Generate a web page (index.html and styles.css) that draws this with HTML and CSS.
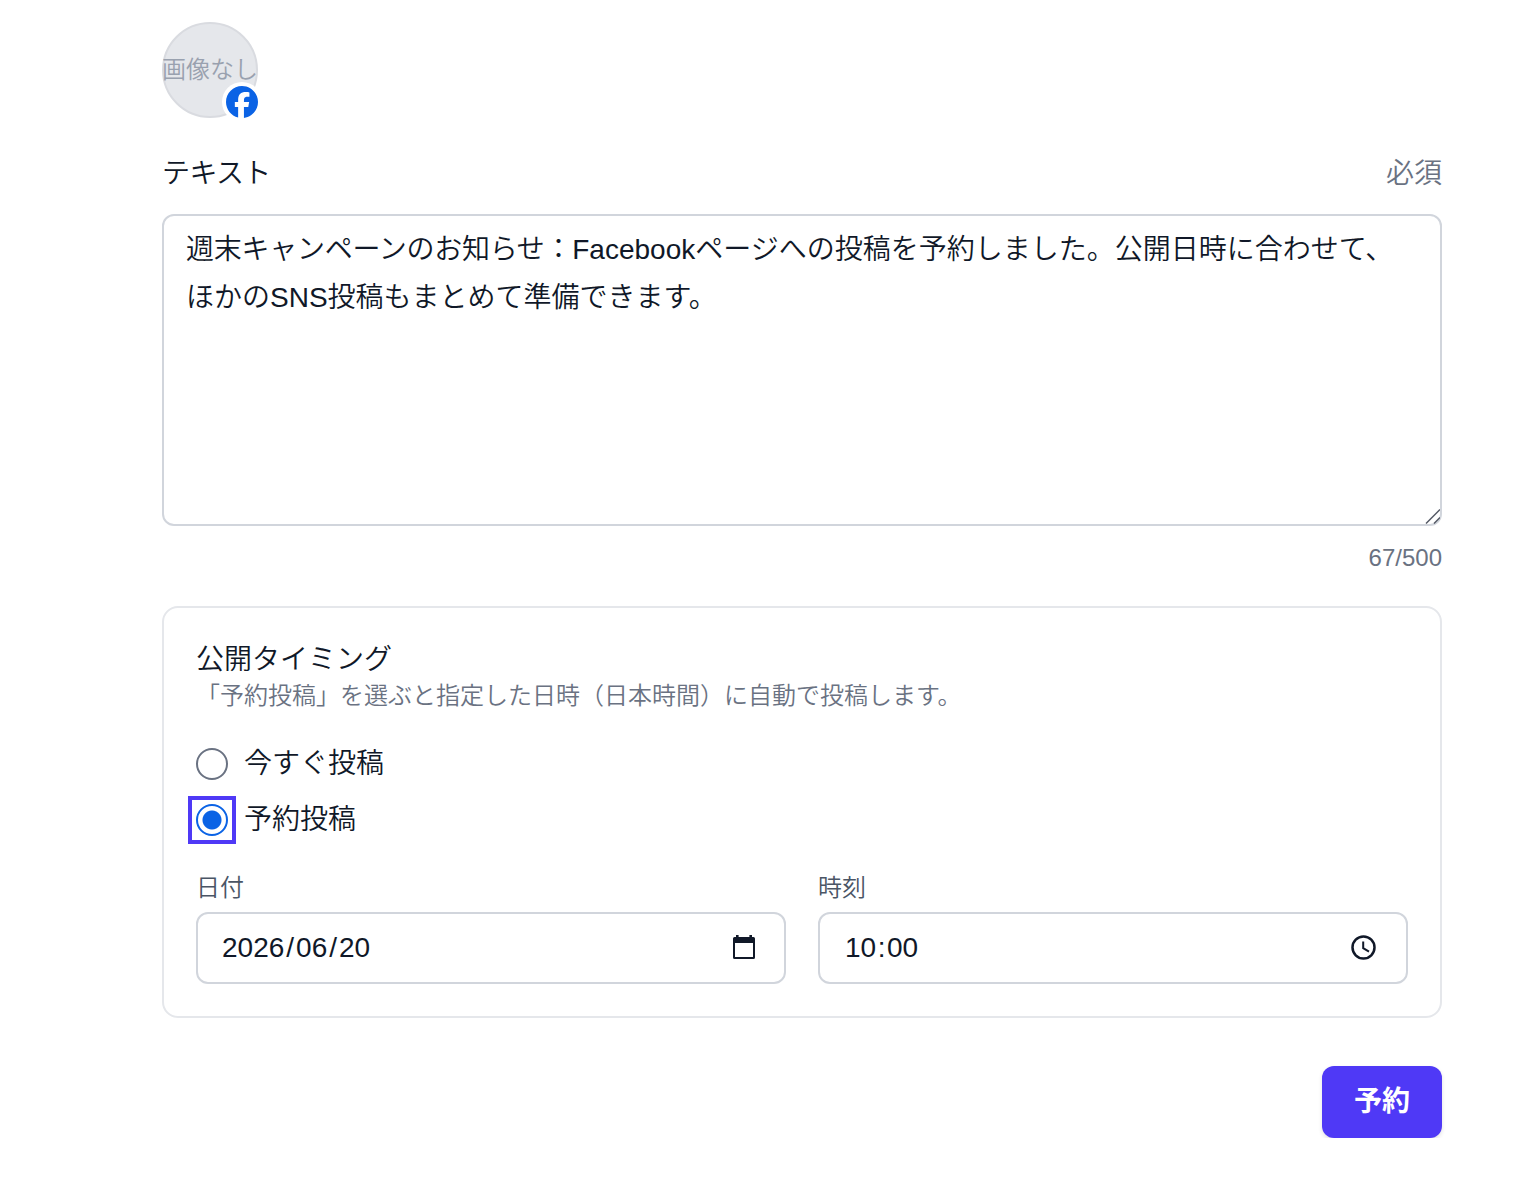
FILE: index.html
```html
<!DOCTYPE html>
<html lang="ja">
<head>
<meta charset="utf-8">
<title>予約投稿</title>
<link rel="stylesheet" href="styles.css">
</head>
<body>
<main class="composer">
  <div class="account">
    <span class="avatar">画像なし</span>
    <span class="badge">
      <svg width="32" height="32" viewBox="0 0 24 24"><path fill="#0b63e5" d="M9.101 23.691v-7.980H6.627v-3.667h2.474v-1.580c0-4.085 1.848-5.978 5.858-5.978.401 0 .955.042 1.468.103a8.680 8.680 0 0 1 1.141.195v3.325a8.623 8.623 0 0 0-.653-.036 26.805 26.805 0 0 0-.733-.009c-.707 0-1.259.096-1.675.309a1.686 1.686 0 0 0-.679.622c-.258.420-.374.995-.374 1.752v1.297h3.919l-.386 2.103-.287 1.564h-3.246v8.245C19.396 23.238 24 18.179 24 12.044c0-6.627-5.373-12-12-12s-12 5.373-12 12c0 5.628 3.874 10.350 9.101 11.647Z"/></svg>
    </span>
  </div>

  <div class="field-head"><span class="title">テキスト</span><span class="required">必須</span></div>
  <div class="textarea">
    <div><span class="kana-tight">週末キャンペーンのお知らせ：</span>Facebookページへの投稿を予約しました。公開日時に合わせて、</div>
    <div>ほかのSNS投稿もまとめて準備できます。</div>
    <svg class="resizer" width="16" height="16" viewBox="0 0 16 16"><path d="M2 15.500 16 1.500M10 15.500l6-6" fill="none" stroke="#555a66" stroke-width="1.500"/></svg>
  </div>
  <div class="counter">67/500</div>

  <section class="timing">
    <h2>公開タイミング</h2>
    <p>「予約投稿」を選ぶと指定した日時（日本時間）に自動で投稿します。</p>
    <div class="options">
      <label class="option"><span class="radio"></span>今すぐ投稿</label>
      <label class="option"><span class="radio checked"></span>予約投稿</label>
    </div>
    <div class="schedule">
      <div>
        <div class="label">日付</div>
        <div class="input"><span>2026<span class="sep">/</span>06<span class="sep">/</span>20</span>
          <svg width="30" height="30" viewBox="0 0 30 30"><path fill="#101828" fill-rule="evenodd" d="M7 2h2.600v2h10.800V2H23v2h1.500Q26 4 26 5.500v19Q26 26 24.500 26h-19Q4 26 4 24.500v-19Q4 4 5.500 4H7zM6 10v14h18V10z"/></svg>
        </div>
      </div>
      <div>
        <div class="label">時刻</div>
        <div class="input time"><span>10<span class="sep">:</span>00</span>
          <svg width="30" height="30" viewBox="0 0 30 30" fill="none" stroke="#101828"><circle cx="15.500" cy="14.500" r="11" stroke-width="2.500"/><path stroke-width="2" d="M15.200 8.500v6.700l5.800 3.500"/></svg>
        </div>
      </div>
    </div>
  </section>
  <div class="actions"><button class="submit" type="button">予約</button></div>
</main>
</body>
</html>
```
FILE: styles.css
```css
* { box-sizing: border-box; }
body {
  margin: 0;
  background: #fff;
  color: #101828;
  font: 350 28px/40px "Liberation Sans", "Noto Sans CJK JP", sans-serif;
}
.composer { width: 1280px; margin: 22px 0 0 162px; }
.account { position: relative; width: 96px; height: 96px; }
.avatar {
  display: flex;
  align-items: center;
  justify-content: center;
  width: 96px;
  height: 96px;
  border: 2px solid #d9dbe0;
  border-radius: 50%;
  background: #e5e7eb;
  color: #99a1af;
  font-size: 24px;
  line-height: 32px;
  white-space: nowrap;
}
.badge {
  position: absolute;
  right: -4px;
  bottom: -4px;
  width: 40px;
  height: 40px;
  padding: 4px;
  border-radius: 50%;
  background: #fff;
}
.badge svg { display: block; }
.field-head { display: flex; justify-content: space-between; margin-top: 36px; }
.title { letter-spacing: -0.6px; }
.required { color: #6a7282; }
.textarea {
  position: relative;
  height: 312px;
  margin-top: 20px;
  padding: 10px 22px;
  border: 2px solid #d1d5dc;
  border-radius: 12px;
  line-height: 48px;
  white-space: nowrap;
}
.kana-tight { letter-spacing: -0.27px; }
.resizer { position: absolute; right: 0; bottom: 0; }
.counter { margin-top: 16px; color: #6a7282; font-size: 24px; line-height: 32px; text-align: right; }
.timing {
  height: 412px;
  margin-top: 32px;
  padding: 32px;
  border: 2px solid #e5e7eb;
  border-radius: 16px;
}
h2 { margin: 0; font-size: 28px; line-height: 40px; font-weight: 350; }
p { margin: 0; color: #6a7282; font-size: 24px; line-height: 32px; }
.options { display: grid; gap: 16px; margin-top: 32px; }
.option { display: flex; align-items: center; gap: 16px; }
.radio { width: 32px; height: 32px; border: 2px solid #6a7282; border-radius: 50%; }
.checked {
  position: relative;
  border-color: #0b63e5;
  background: radial-gradient(circle, #0b63e5 9px, #fff 10px);
}
.checked::after { content: ""; position: absolute; inset: -10px; border: 4px solid #4f39f6; }
.schedule { display: grid; grid-template-columns: 1fr 1fr; gap: 32px; margin-top: 32px; }
.label { color: #4a5565; font-size: 24px; line-height: 32px; }
.input {
  display: flex;
  align-items: center;
  justify-content: space-between;
  height: 72px;
  margin-top: 8px;
  padding: 0 25px 0 24px;
  border: 2px solid #d1d5dc;
  border-radius: 12px;
}
.time { padding: 0 28px 0 25px; }
.sep { padding: 0 2px; }
.time .sep { padding: 0 1.5px; }
.actions { display: flex; justify-content: flex-end; margin-top: 48px; }
.submit {
  width: 120px;
  height: 72px;
  padding: 0;
  border: 0;
  border-radius: 12px;
  background: #4f39f6;
  box-shadow: 0 2px 4px rgb(0 0 0 / 12%);
  color: #fff;
  font: 700 28px/40px "Liberation Sans", "Noto Sans CJK JP", sans-serif;
}
```
